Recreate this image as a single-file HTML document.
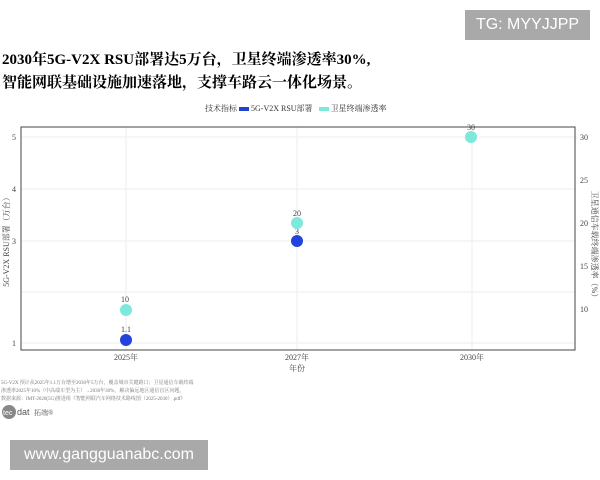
<!DOCTYPE html>
<html><head><meta charset="utf-8"><style>
body{margin:0;width:600px;height:480px;background:#fff;overflow:hidden;position:relative;font-family:"Liberation Serif","Noto Serif CJK SC",serif}
.a{position:absolute;white-space:nowrap}
</style></head><body>
<div class="a" style="left:465px;top:10px;width:125px;height:30px;background:#a9a9a9;color:#fff;font:16px 'Liberation Sans',sans-serif;line-height:30px;text-align:center">TG: MYYJJPP</div>
<div class="a" style="left:2px;top:49px;font-size:15px;color:#000;line-height:23px;font-weight:bold">2030年5G-V2X RSU部署达5万台，卫星终端渗透率30%,<br>智能网联基础设施加速落地，支撑车路云一体化场景。</div>
<div class="a" style="left:205px;top:103px;font-size:8px;color:#333">技术指标 <span style="display:inline-block;width:10px;height:4px;background:#2244cc;vertical-align:middle"></span> 5G-V2X RSU部署 &nbsp; <span style="display:inline-block;width:10px;height:4px;background:#7de8dc;vertical-align:middle"></span> 卫星终端渗透率</div>
<svg class="a" style="left:0;top:0" width="600" height="480">
<g stroke="#eee" stroke-width="1">
<line x1="126" y1="127" x2="126" y2="350"/><line x1="297" y1="127" x2="297" y2="350"/><line x1="472" y1="127" x2="472" y2="350"/>
<line x1="21" y1="137" x2="575" y2="137"/><line x1="21" y1="189" x2="575" y2="189"/><line x1="21" y1="241" x2="575" y2="241"/><line x1="21" y1="292" x2="575" y2="292"/><line x1="21" y1="343" x2="575" y2="343"/>
</g>
<rect x="21" y="127" width="554" height="223" fill="none" stroke="#444" stroke-width="1"/>
<g font-size="8" fill="#444" text-anchor="end">
<text x="16" y="140">5</text><text x="16" y="192">4</text><text x="16" y="244">3</text><text x="16" y="346">1</text>
</g>
<g font-size="8" fill="#444">
<text x="580" y="140">30</text><text x="580" y="183">25</text><text x="580" y="226">20</text><text x="580" y="269">15</text><text x="580" y="312">10</text>
</g>
<g font-size="8" fill="#444" text-anchor="middle">
<text x="126" y="360">2025年</text><text x="297" y="360">2027年</text><text x="472" y="360">2030年</text>
<text x="297" y="371">年份</text>
<text transform="translate(9,240) rotate(-90)">5G-V2X RSU部署（万台）</text>
<text transform="translate(592,246) rotate(90)">卫星通信车载终端渗透率（%）</text>
<text x="125" y="302">10</text><text x="126" y="332">1.1</text><text x="297" y="216">20</text><text x="297" y="234">3</text><text x="471" y="130">30</text>
</g>
<circle cx="126" cy="310" r="6" fill="#7de8dc"/>
<circle cx="126" cy="340" r="6" fill="#2244dd"/>
<circle cx="297" cy="223" r="6" fill="#7de8dc"/>
<circle cx="297" cy="241" r="6" fill="#2244dd"/>
<circle cx="471" cy="137" r="6" fill="#7de8dc"/>
<g font-size="5" fill="#777"><text x="1" y="384">5G-V2X 预计从2025年1.1万台增至2030年5万台，覆盖城市关键路口；卫星通信车载终端</text><text x="1" y="392">渗透率2025年10%（中高端车型为主）→2030年30%，解决偏远地区通信盲区问题。</text><text x="1" y="400">数据来源：IMT-2020(5G)推进组《智能网联汽车网络技术路线图（2025-2030）.pdf》</text></g>
<circle cx="9" cy="412" r="7" fill="#888"/>
<text x="3" y="415" font-size="7" fill="#fff" font-family="Liberation Sans">tec</text>
<text x="17" y="415" font-size="9" fill="#555" font-family="Liberation Sans">dat</text>
<text x="34" y="415" font-size="7" fill="#555">拓端®</text>
</svg>
<div class="a" style="left:10px;top:440px;width:198px;height:30px;background:#a9a9a9;color:#fff;font:16px 'Liberation Sans',sans-serif;line-height:30px;text-align:center">www.gangguanabc.com</div>
</body></html>
